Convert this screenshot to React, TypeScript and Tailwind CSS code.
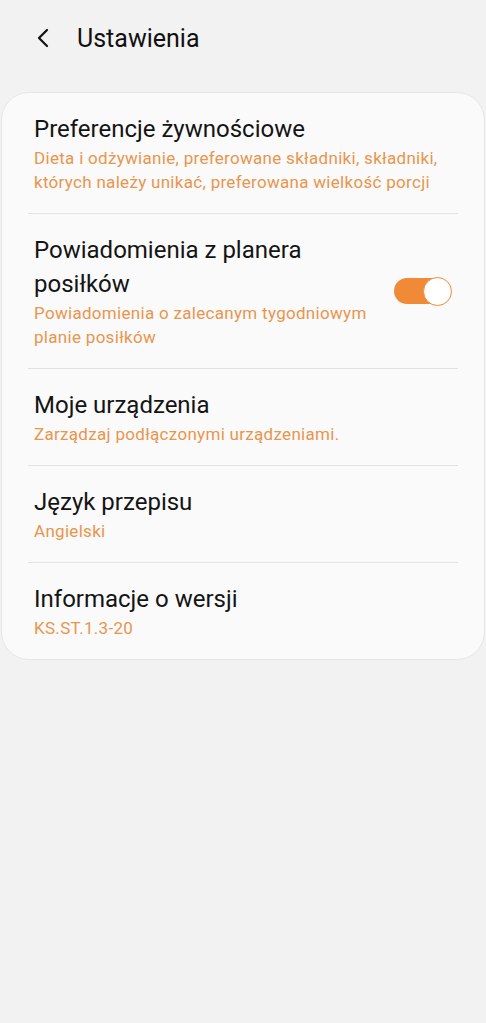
import React from 'react';

type Item = {
  title: string;
  subtitle: string;
  toggle?: boolean;
};

const items: Item[] = [
  {
    title: 'Preferencje żywnościowe',
    subtitle: 'Dieta i odżywianie, preferowane składniki, składniki, których należy unikać, preferowana wielkość porcji',
  },
  {
    title: 'Powiadomienia z planera posiłków',
    subtitle: 'Powiadomienia o zalecanym tygodniowym planie posiłków',
    toggle: true,
  },
  { title: 'Moje urządzenia', subtitle: 'Zarządzaj podłączonymi urządzeniami.' },
  { title: 'Język przepisu', subtitle: 'Angielski' },
  { title: 'Informacje o wersji', subtitle: 'KS.ST.1.3-20' },
];

const Toggle: React.FC = () => (
  <div className="relative w-[58px] h-[29px] flex items-center">
    <div className="w-[56px] h-[26px] rounded-full bg-[#f08a37]" />
    <div className="absolute right-0 top-0 w-[29px] h-[29px] rounded-full bg-white border-[1.5px] border-[#f08a37]" />
  </div>
);

export default function App() {
  return (
    <div
      className="min-h-[1023px] w-full bg-[#f2f2f2] text-[#111]"
      style={{ fontFamily: 'Roboto, "Noto Sans", sans-serif' }}
    >
      {/* Header */}
      <div className="flex items-center h-[76px] pl-[34px]">
        <svg width="18" height="20" viewBox="0 0 18 20" fill="none" className="mr-[25px]">
          <path d="M13 2 L5 10 L13 18" stroke="#111" strokeWidth="2.2" strokeLinecap="round" strokeLinejoin="round" />
        </svg>
        <h1 className="text-[25px] leading-none">Ustawienia</h1>
      </div>

      {/* Card */}
      <div className="mx-[1px] mt-[16px] rounded-[28px] bg-[#fafafa] border border-[#e6e6e6] px-[26px]">
        {items.map((item, i) => (
          <div
            key={i}
            className={`flex items-center py-[19px] ${i < items.length - 1 ? 'border-b border-[#e2e2e2]' : ''}`}
          >
            <div className={`flex-1 pl-[6px] ${item.toggle ? 'pr-[22px]' : 'pr-0'}`}>
              <div className="text-[24px] leading-[34px] text-[#141414]">{item.title}</div>
              <div className="text-[17px] leading-[24px] tracking-[0.3px] text-[#e9954d]">{item.subtitle}</div>
            </div>
            {item.toggle && (
              <div className="pr-[6px]">
                <Toggle />
              </div>
            )}
          </div>
        ))}
      </div>
    </div>
  );
}
